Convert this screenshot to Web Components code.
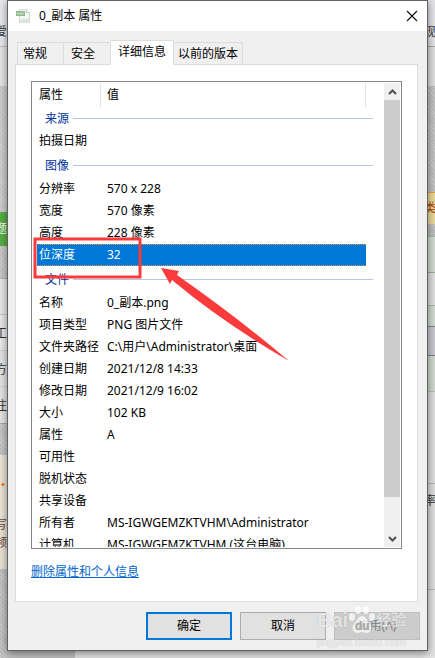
<!DOCTYPE html>
<html lang="zh-CN">
<head>
<meta charset="UTF-8">
<meta name="viewport" content="width=device-width, initial-scale=1">
<title>0_副本 属性</title>
<style>
  html, body { height: 100%; }
  body {
    margin: 0;
    overflow: hidden;
    color: #000;
    font: 12px/22px "Noto Sans", "Noto Sans CJK SC", sans-serif;
  }
</style>
</head>
<body>
<desktop-page>
  <edge-strip slot="left" style="text-indent: -5px">
    <edge-block size="46" color="#e9e9ed" style="--top: 22px">爱淘</edge-block>
    <edge-block size="40" color="#e6e6e6" line="#bdbdbd"></edge-block>
    <edge-block size="126" color="#c9c9c9" hatch></edge-block>
    <edge-block size="34" color="#55b046" style="--top: 7px; --ink: #fff">题</edge-block>
    <edge-block size="32" color="#c4c4c4" hatch></edge-block>
    <edge-block size="36" color="#e8e8e8" line="#b4b4b4"></edge-block>
    <edge-block size="36" color="#e8e8e8" line="#c8c8c8" style="--top: 9px">工</edge-block>
    <edge-block size="36" color="#e4e4e4" line="#d0d0d0" style="--top: 9px">方</edge-block>
    <edge-block size="37" color="#e4e4e4" line="#d0d0d0" style="--top: 9px">注</edge-block>
    <edge-block size="32" color="#c2c2c2" line="#a8a8a8" hatch></edge-block>
    <edge-block size="60" color="#ebe5d7" style="--top: 20px; --ink: #f60; text-indent: 0; font-size: 7px">✦</edge-block>
    <edge-block size="18" color="#e9e3d5" style="--ink: #6c4545">写作</edge-block>
    <edge-block size="36" color="#e9e3d5" style="--ink: #6c4545">频率</edge-block>
    <edge-block size="89" color="#bfbfbf" hatch></edge-block>
  </edge-strip>

  <properties-dialog slot="dialog">
    <file-icon slot="icon"></file-icon>
    <span slot="title">0_副本 属性</span>
    <tab-strip slot="tabs" labels="常规,安全,详细信息,以前的版本" active="2"></tab-strip>
    <property-list slot="panel"></property-list>
    <a slot="panel" href="#remove">删除属性和个人信息</a>
    <push-button slot="buttons" kind="primary">确定</push-button>
    <push-button slot="buttons">取消</push-button>
    <push-button slot="buttons" kind="disabled">应用(A)</push-button>
  </properties-dialog>

  <edge-strip slot="right" style="text-indent: -4px">
    <edge-block size="46" color="#e4e4e8" style="--top: 22px">现</edge-block>
    <edge-block size="40" color="#dedede" line="#a9a9a9"></edge-block>
    <edge-block size="106" color="#bdbdbd" hatch></edge-block>
    <edge-block size="32" color="#e8d99a" line="#e6a23c" style="--top: 5px; --ink: #b0420a">类</edge-block>
    <edge-block size="12" color="#b9b9b9" hatch></edge-block>
    <edge-block size="36" color="#d2dcd2" line="#a3bba5"></edge-block>
    <edge-block size="33" color="#dfdfdf" line="#94b398"></edge-block>
    <edge-block size="21" color="#d2dcd2" line="#a3bba5"></edge-block>
    <edge-block size="29" color="#c9c8d0" line="#80848f"></edge-block>
    <edge-block size="36" color="#cfdacf" line="#7c827d"></edge-block>
    <edge-block size="92" color="#dedede" line="#b5c4b5"></edge-block>
    <edge-block size="106" color="#dedede" line="#b5b5b5" style="--top: 7px">率</edge-block>
    <edge-block size="69" color="#e2e2e2" line="#bbb"></edge-block>
  </edge-strip>
</desktop-page>

<site-watermark></site-watermark>

<script>
const define = (name, markup, setup) => {
  customElements.define(name, class extends HTMLElement {
    constructor() {
      super();
      this.attachShadow({ mode: 'open' });
    }

    connectedCallback() {
      this.shadowRoot.innerHTML = markup;
      if (setup) setup(this, this.shadowRoot);
    }
  });
};

/* Page behind the dialog */
define('desktop-page', `
  <style>
    :host {
      display: grid;
      grid-template-columns: 7px minmax(0, 1fr) 7px;
      height: 100%;
      background: linear-gradient(90deg, #bfbfbf 75px, #e3e3e3 75px);
    }
  </style>
  <slot name="left"></slot>
  <slot name="dialog"></slot>
  <slot name="right"></slot>
`);

define('edge-strip', `
  <style>
    :host { display: flex; flex-direction: column; overflow: hidden; }
    ::slotted(*) { flex: none; }
  </style>
  <slot></slot>
`);

define('edge-block', `
  <style>
    :host {
      display: flex;
      box-sizing: border-box;
      padding-top: var(--top, 0);
      overflow: hidden;
      line-height: 20px;
      white-space: nowrap;
      color: var(--ink, #333);
    }
    :host([hatch]) {
      background-image: repeating-linear-gradient(45deg, #fff3 0 1px, transparent 1px 3px);
    }
  </style>
  <slot></slot>
`, (host) => {
  host.style.height = host.getAttribute('size') + 'px';
  host.style.backgroundColor = host.getAttribute('color');
  const line = host.getAttribute('line');
  if (line) host.style.borderTop = '1px solid ' + line;
});

define('properties-dialog', `
  <style>
    :host {
      display: flex;
      flex-direction: column;
      align-self: start;
      box-sizing: border-box;
      border: 1px solid #626262;
      background: #f0f0f0;
      box-shadow: 0 2px 8px #0007;
      position: relative;
    }
    header {
      display: flex;
      align-items: center;
      gap: 8px;
      height: 30px;
      padding: 0 9px 0 8px;
      background: #fff;
    }
    h1 { flex: 1; margin: 0; font: inherit; }
    .close {
      display: flex;
      padding: 0;
      border: 0;
      background: none;
    }
    main { padding: 9px 9px 0 7px; }
    .panel {
      display: flex;
      flex-direction: column;
      align-items: flex-start;
      gap: 12px;
      padding: 16px 15px 18px;
      border: 1px solid #dcdcdc;
      background: #fff;
    }
    footer {
      display: flex;
      justify-content: flex-end;
      gap: 8px;
      padding: 10px 7px;
    }
    ::slotted(a) { color: #0066cc; text-decoration: underline; }
    ::slotted(property-list) { align-self: stretch; }
  </style>
  <header>
    <slot name="icon"></slot>
    <h1><slot name="title"></slot></h1>
    <button class="close" aria-label="关闭">
      <svg width="12" height="12" viewBox="0 0 12 12" stroke="#111" stroke-width="1.2">
        <path d="M1 1l10 10M11 1L1 11" />
      </svg>
    </button>
  </header>
  <main>
    <slot name="tabs"></slot>
    <div class="panel"><slot name="panel"></slot></div>
  </main>
  <footer><slot name="buttons"></slot></footer>
`);

define('file-icon', `
  <style>
    :host { display: flex; }
  </style>
  <svg width="15" height="15" viewBox="0 0 15 15">
    <path d="M3.5 .5h7l3 3v10h-10z" fill="#f6faf6" stroke="#d3dcd3" />
    <path d="M10.500 .5v3h3" fill="#fff" stroke="#b9c9ba" />
    <path d="M4 11.500l3-2 2 1 4-2v5H4z" fill="#dbe8d9" />
    <rect y="2" width="9" height="5" fill="#8fb98a" />
    <path d="M1.500 6V3.500h1v1h-1M4 6V3.500L5 6V3.500M7.500 3.500H6.500V5.500h1V4.500" fill="none" stroke="#d9ead7" stroke-width=".6" />
  </svg>
`);

define('tab-strip', `
  <style>
    :host { display: block; margin-bottom: -1px; }
    div { display: flex; align-items: flex-end; padding-left: 2px; }
    button {
      box-sizing: border-box;
      height: 23px;
      padding: 0 4px;
      border: 1px solid #dcdcdc;
      border-left-width: 0;
      background: #f0f0f0;
      color: inherit;
      font: inherit;
      line-height: 21px;
      text-align: left;
      white-space: nowrap;
    }
    button:first-child { padding-left: 5px; border-left-width: 1px; }
    button:nth-child(-n+2) { width: 47px; }
    button:nth-child(2) { padding-left: 7px; }
    button[aria-selected="true"] {
      position: relative;
      height: 25px;
      padding: 0 7px 2px;
      border-bottom-color: #fff;
      background: #fff;
    }
  </style>
  <div role="tablist"></div>
`, (host, root) => {
  const active = Number(host.getAttribute('active'));
  root.querySelector('div').innerHTML = host.getAttribute('labels').split(',')
    .map((label, i) => `<button role="tab" aria-selected="${i === active}">${label}</button>`)
    .join('');
});

const groups = [
  ['来源', [['拍摄日期', '']]],
  ['图像', [
    ['分辨率', '570 x 228'],
    ['宽度', '570 像素'],
    ['高度', '228 像素'],
    ['位深度', '32'],
  ]],
  ['文件', [
    ['名称', '0_副本.png'],
    ['项目类型', 'PNG 图片文件'],
    ['文件夹路径', 'C:\\用户\\Administrator\\桌面'],
    ['创建日期', '2021/12/8 14:33'],
    ['修改日期', '2021/12/9 16:02'],
    ['大小', '102 KB'],
    ['属性', 'A'],
    ['可用性', ''],
    ['脱机状态', ''],
    ['共享设备', ''],
    ['所有者', 'MS-IGWGEMZKTVHM\\Administrator'],
    ['计算机', 'MS-IGWGEMZKTVHM (这台电脑)'],
  ]],
];
const selected = '位深度';

define('property-list', `
  <style>
    :host {
      display: flex;
      position: relative;
      box-sizing: border-box;
      height: 468px;
      padding: 1px 1px 1px 0;
      border: 1px solid #828790;
      background: #fff;
    }
    .view { flex: 1; min-width: 0; overflow: hidden; padding-right: 10px; }
    table {
      width: 100%;
      table-layout: fixed;
      border-collapse: separate;
      border-spacing: 0;
      line-height: 20px;
    }
    th, td {
      height: 22px;
      padding: 0;
      font-weight: normal;
      text-align: left;
      white-space: nowrap;
    }
    thead th { height: 24px; border-right: 1px solid #e3e3e3; box-sizing: border-box; }
    th:first-child { width: 69px; padding-left: 7px; box-sizing: border-box; }
    td, thead th + th { padding-left: 6px; }
    .group th:first-child { height: 26px; padding: 1px 0 0 13px; color: #003399; }
    .group div { display: flex; align-items: center; gap: 4px; margin-right: -7px; }
    .group div::after { content: ""; flex: 1; height: 1px; background: #b9c4e2; }
    tbody:first-of-type .group th { height: 23px; padding-top: 0; }
    .selected { color: #fff; }
    .selected th, .selected td {
      background:
        repeating-linear-gradient(90deg, #e0964f 0 1px, transparent 1px 2px) top / 100% 1px no-repeat,
        repeating-linear-gradient(90deg, #e0964f 0 1px, transparent 1px 2px) bottom / 100% 1px no-repeat,
        #0078d7;
    }
    .selected th { box-shadow: inset 5px 0 #fff; }
    .mark {
      position: absolute;
      left: 0;
      top: 155px;
      overflow: visible;
    }
  </style>
  <div class="view">
    <table>
      <thead><tr><th>属性</th><th>值</th></tr></thead>
    </table>
  </div>
  <scroll-rail></scroll-rail>
  <svg class="mark" width="258" height="126" viewBox="0 0 258 126">
    <rect x="3" y="2" width="105" height="38" fill="none" stroke="#fb3b3b" stroke-width="3" />
    <path d="M129 31L147 34 145 38Q205 80 257 124Q190 85 140 43L138 47z" fill="#fb3b3b" />
  </svg>
`, (host, root) => {
  root.querySelector('table').insertAdjacentHTML('beforeend', groups.map(([name, rows]) => `
    <tbody>
      <tr class="group"><th colspan="2"><div>${name}</div></th></tr>
      ${rows.map(([key, value]) => `
        <tr${key === selected ? ' class="selected"' : ''}><th>${key}</th><td>${value}</td></tr>
      `).join('')}
    </tbody>
  `).join(''));
});

define('scroll-rail', `
  <style>
    :host {
      display: flex;
      flex-direction: column;
      width: 16px;
      margin-left: 8px;
      background: #f0f0f0;
    }
    button {
      display: flex;
      align-items: center;
      justify-content: center;
      height: 17px;
      padding: 0;
      border: 0;
      background: none;
    }
    .thumb { flex: 1; margin-bottom: 33px; background: #cdcdcd; }
    path { fill: none; stroke: #505050; stroke-width: 2; }
  </style>
  <button aria-label="向上滚动"><svg width="9" height="6" viewBox="0 0 9 6"><path d="M1 5l3.500-3.500L8 5" /></svg></button>
  <div class="thumb"></div>
  <button aria-label="向下滚动"><svg width="9" height="6" viewBox="0 0 9 6"><path d="M1 1l3.500 3.500L8 1" /></svg></button>
`);

define('push-button', `
  <style>
    :host { display: block; }
    button {
      box-sizing: border-box;
      width: 86px;
      height: 28px;
      padding: 0;
      border: 1px solid #adadad;
      background: #e1e1e1;
      color: inherit;
      font: inherit;
    }
    :host([kind="primary"]) button { border: 2px solid #0078d7; }
    :host([kind="disabled"]) button { border-color: #bfbfbf; background: #ccc; color: #838383; }
  </style>
  <button><slot></slot></button>
`, (host, root) => {
  root.querySelector('button').disabled = host.getAttribute('kind') === 'disabled';
});

/* Watermark lies over the dialog's bottom corner */
define('site-watermark', `
  <style>
    :host {
      position: absolute;
      left: 317px;
      top: 602px;
      color: #fffb;
      font-family: "Liberation Sans", "Noto Sans CJK SC", sans-serif;
      text-shadow: 0 0 1px #0004;
      pointer-events: none;
    }
    .name { display: flex; align-items: center; height: 32px; padding-top: 2px; font-size: 20px; font-weight: bold; }
    .name span:last-child { font-size: 15px; }
    .site { font-size: 11px; line-height: 12px; }
    svg { fill: currentColor; }
    .du { fill: #aaa; font: bold 12px "Liberation Sans", sans-serif; }
  </style>
  <div class="name">
    <span>Bai</span>
    <svg width="28" height="30" viewBox="0 0 28 30">
      <ellipse cx="4" cy="12" rx="3" ry="4" />
      <ellipse cx="10" cy="5" rx="3" ry="4" />
      <ellipse cx="18" cy="5" rx="3" ry="4" />
      <ellipse cx="24" cy="12" rx="3" ry="4" />
      <path d="M14 11c4 0 5 5 8 8 3 4 1 9-4 9-2 0-2-1-4-1s-2 1-4 1c-5 0-7-5-4-9 3-3 4-8 8-8z" />
      <text class="du" x="7" y="25">du</text>
    </svg>
    <span>经验</span>
  </div>
  <div class="site">jingyan.baidu.com</div>
`);
</script>
</body>
</html>
